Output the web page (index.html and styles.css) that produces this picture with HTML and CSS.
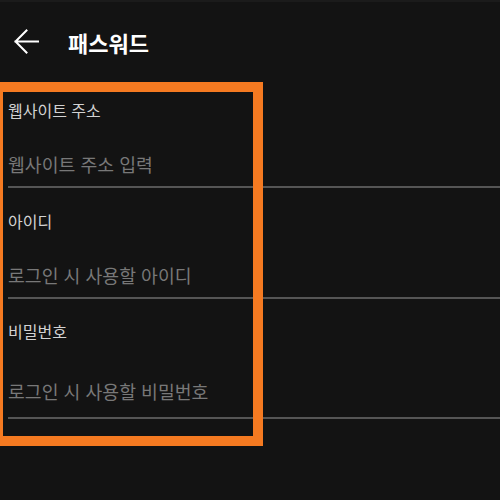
FILE: index.html
```html
<!DOCTYPE html>
<html lang="ko">
<head>
<meta charset="utf-8">
<title>패스워드</title>
<link rel="stylesheet" href="styles.css">
</head>
<body>
<header class="appbar">
  <svg class="back" width="26" height="26" viewBox="0 0 26 26" aria-hidden="true">
    <path d="M25 12.5H2.5M13.5 1.5L2.5 12.5L13.5 23.5" fill="none" stroke="#ffffff" stroke-width="2" stroke-linecap="square"/>
  </svg>
  <h1 class="title">패스워드</h1>
</header>
<main class="form">
  <div class="field field--first">
    <div class="label">웹사이트 주소</div>
    <div class="input">웹사이트 주소 입력</div>
  </div>
  <div class="field">
    <div class="label">아이디</div>
    <div class="input">로그인 시 사용할 아이디</div>
  </div>
  <div class="field field--last">
    <div class="label">비밀번호</div>
    <div class="input">로그인 시 사용할 비밀번호</div>
  </div>
  <div class="highlight"></div>
</main>
</body>
</html>
```
FILE: styles.css
```css
html, body {
  margin: 0;
  padding: 0;
  background: #131313;
  font-family: "Noto Sans CJK KR", "Noto Sans", sans-serif;
}
body {
  width: 500px;
  height: 500px;
  overflow: hidden;
  position: relative;
}
.appbar {
  height: 80px;
  border-top: 2px solid #1b1b1b;
  display: flex;
  align-items: center;
  padding-left: 13px;
}
.back {
  display: block;
}
.title {
  margin: 0 0 0 29px;
  font-size: 22px;
  font-weight: 700;
  color: #ffffff;
  line-height: 24px;
}
.form {
  margin-left: 8px;
}
.field {
  padding-top: 23px;
  padding-bottom: 10px;
  border-bottom: 2px solid #555555;
}
.label {
  font-size: 16px;
  line-height: 20px;
  color: #d2d2d2;
}
.input {
  margin-top: 32px;
  font-size: 18.3px;
  line-height: 24px;
  color: #787878;
}
.field--first {
  padding-top: 18px;
}
.field--last {
  padding-top: 22px;
  padding-bottom: 14px;
}
.field--last .input {
  margin-top: 38px;
}
.highlight {
  position: absolute;
  left: -7px;
  top: 82px;
  width: 250px;
  height: 344px;
  border: 10px solid #f57a21;
}
```
